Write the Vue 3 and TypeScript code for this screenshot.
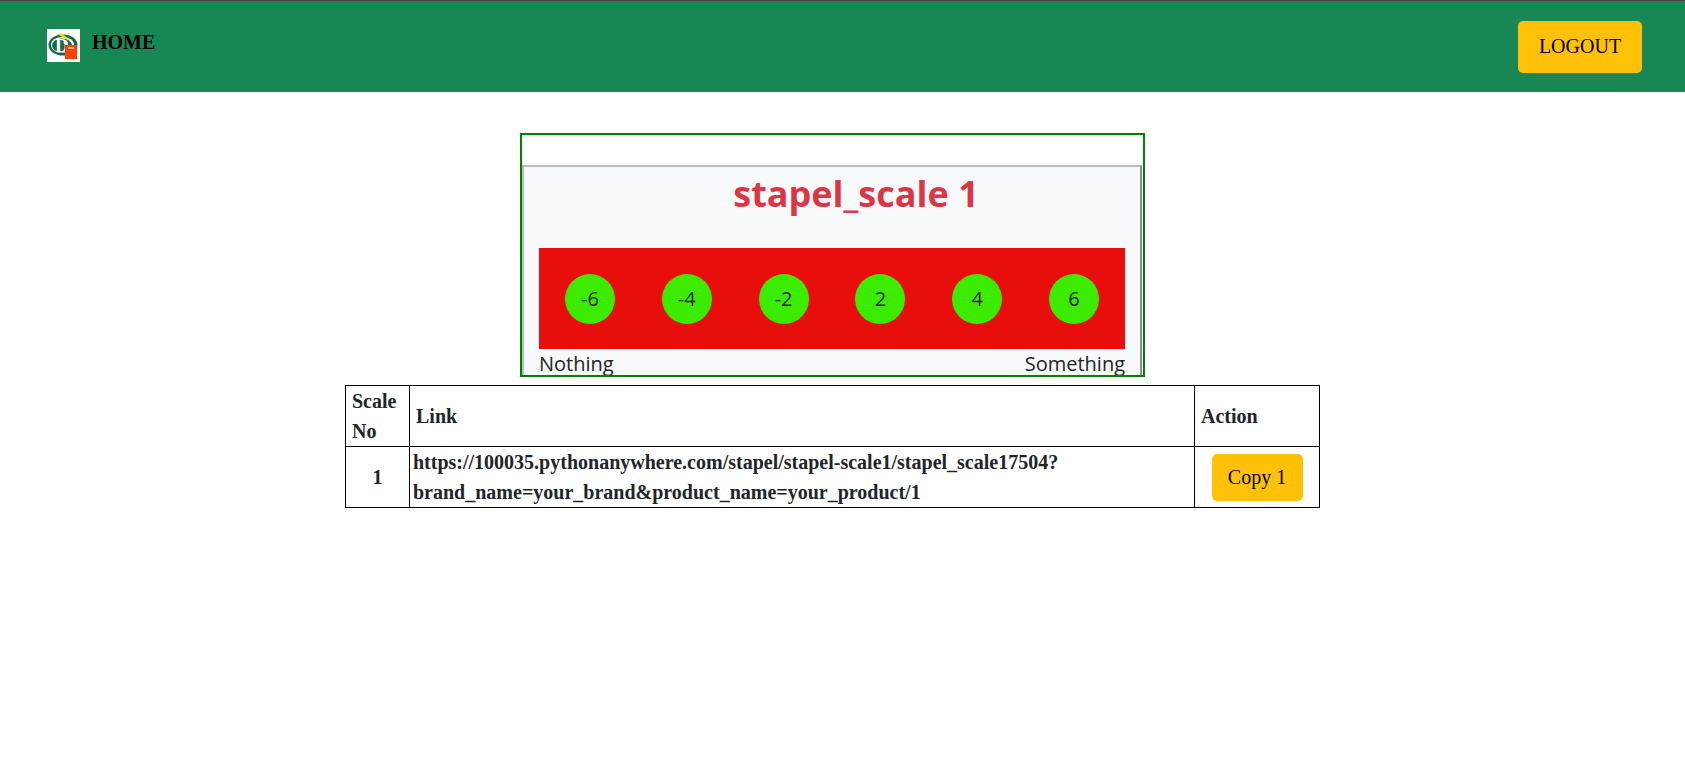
<script setup lang="ts">
const scores: number[] = [-6, -4, -2, 2, 4, 6]
const link = 'https://100035.pythonanywhere.com/stapel/stapel-scale1/stapel_scale17504?brand_name=your_brand&product_name=your_product/1'
</script>

<template>
  <nav class="navbar">
    <a class="brand">
      <svg class="logo" viewBox="0 0 33 33" width="33" height="33">
        <rect width="33" height="33" fill="#fff" />
        <ellipse cx="16" cy="16" rx="14.5" ry="10.5" fill="#17694a" />
        <ellipse cx="15.5" cy="16" rx="11.5" ry="8" fill="#fff" />
        <ellipse cx="15" cy="16.5" rx="10" ry="7" fill="#17694a" />
        <path d="M10 5 L15 4.500 L23 11 L19 10 Z" fill="#e8e000" />
        <text x="8" y="23" class="logo-d">D</text>
        <circle cx="18.500" cy="13.500" r="2" fill="#fff" />
        <rect x="18" y="16" width="12" height="14" fill="#fb4007" />
        <rect x="21" y="18" width="6" height="2" fill="#ffb59c" />
      </svg>
      <span class="brand-text">HOME</span>
    </a>
    <button class="btn logout">LOGOUT</button>
  </nav>

  <main class="content">
    <div class="frame">
      <div class="card">
        <h1 class="title">stapel_scale 1</h1>
        <div class="scale-bar">
          <span v-for="s in scores" :key="s" class="dot">{{ s }}</span>
        </div>
        <div class="labels">
          <span>Nothing</span>
          <span>Something</span>
        </div>
      </div>
    </div>

    <table class="links">
      <thead>
        <tr>
          <th class="col-no">Scale No</th>
          <th>Link</th>
          <th class="col-action">Action</th>
        </tr>
      </thead>
      <tbody>
        <tr>
          <td class="num">1</td>
          <td class="url">{{ link }}</td>
          <td class="num"><button class="btn copy">Copy 1</button></td>
        </tr>
      </tbody>
    </table>
  </main>
</template>

<style>
html,
body {
  margin: 0;
  background: #fff;
}
</style>

<style scoped>
.navbar {
  box-sizing: border-box;
  height: 92px;
  border-top: 1px solid #444;
  background: #198754;
  display: flex;
  align-items: center;
  justify-content: space-between;
  padding: 0 43px 0 47px;
}

.brand {
  display: flex;
  align-items: flex-start;
  gap: 12px;
  height: 33px;
  margin-top: -2px;
}

.logo {
  display: block;
}

.logo-d {
  font-family: "Liberation Serif", serif;
  font-weight: 700;
  font-size: 19px;
  fill: #fff;
}

.brand-text {
  font-family: "Liberation Serif", serif;
  font-weight: 700;
  font-size: 20px;
  line-height: 26px;
  color: #000;
}

.btn {
  border: 0;
  background: #ffc107;
  color: #000;
  font-family: "Liberation Serif", serif;
  font-size: 20px;
  border-radius: 5px;
  padding: 0;
}

.logout {
  width: 124px;
  height: 52px;
}

.content {
  display: flex;
  flex-direction: column;
  align-items: center;
  padding: 41px 20px 0 0;
}

.frame {
  box-sizing: border-box;
  width: 625px;
  height: 244px;
  border: 2px solid #008000;
  padding-top: 30px;
  overflow: hidden;
  font-family: "Open Sans", sans-serif;
}

.card {
  box-sizing: border-box;
  width: 620px;
  height: 240px;
  background: #f8f9fa;
  border: 2px solid #bbb;
  border-right-color: #8c8c8c;
  border-bottom: 0;
  padding: 0 15px;
}

.title {
  margin: 0;
  padding: 3px 0 0 48px;
  height: 78px;
  text-align: center;
  font-size: 36px;
  line-height: 48px;
  font-weight: 700;
  color: #dc3545;
}

.scale-bar {
  height: 101px;
  background: #e70e0c;
  display: flex;
  align-items: center;
  justify-content: space-between;
  padding: 0 26px;
}

.dot {
  width: 50px;
  height: 50px;
  border-radius: 50%;
  background: #3bec00;
  display: flex;
  align-items: center;
  justify-content: center;
  font-size: 20px;
  color: #212529;
}

.labels {
  display: flex;
  justify-content: space-between;
  font-size: 20px;
  line-height: 30px;
  color: #212529;
}

.links {
  margin-top: 8px;
  width: 975px;
  border-collapse: collapse;
  table-layout: fixed;
  font-family: "Liberation Serif", serif;
  font-size: 20px;
  line-height: 30px;
  font-weight: 700;
  color: #212529;
}

.links th,
.links td {
  border: 1px solid #000;
}

.links th {
  text-align: left;
  padding: 0 6px;
}

.links td {
  padding: 0 3px;
  height: 60px;
}

.col-no {
  width: 51px;
}

.col-action {
  width: 112px;
}

.num {
  text-align: center;
}

.url {
  word-break: normal;
}

.copy {
  width: 91px;
  height: 47px;
  display: block;
  margin: 0 auto;
}
</style>
